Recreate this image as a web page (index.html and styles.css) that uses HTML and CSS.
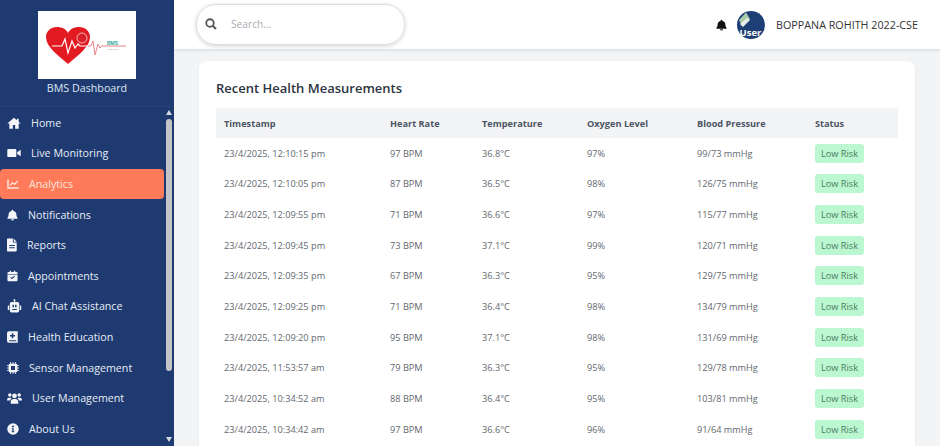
FILE: index.html
```html
<!DOCTYPE html>
<html lang="en">
<head>
    <meta charset="UTF-8">
    <meta name="viewport" content="width=device-width, initial-scale=1.0">
    <title>BMS Dashboard - Analytics</title>
    <link rel="stylesheet" href="styles.css">
</head>
<body>
    <aside class="sidebar">
        <div class="brand">
            <svg class="brand-logo" viewBox="0 0 98 68">
                <rect width="98" height="68" fill="#fff"/>
                <path d="M30 53 C20 44 8 36 8 26 C8 20 13 16 19 16 C24 16 28 18 30 22 C32 18 36 16 41 16 C47 16 52 20 52 26 C52 36 40 44 30 53z" fill="#e21b23"/>
                <path d="M14 35 H24 L27 28 L30 42 L34 30 L37 37 L40 33 L42 35 H50" fill="none" stroke="#fff" stroke-width="1.2"/>
                <circle cx="44" cy="27" r="5" fill="#d9202a" stroke="#f3b4b4" stroke-width="1"/>
                <path d="M50 35 H53 L55 30 L57 44 L60 33 L62 37 L64 35 H88" fill="none" stroke="#e8777c" stroke-width="0.9"/>
                <text class="logo-text" x="69" y="33.8">BMS</text>
                <text class="logo-sub" x="69" y="39">Health Care</text>
            </svg>
            <div class="brand-name">BMS Dashboard</div>
        </div>
        <div class="side-scroll">
            <nav class="side-nav">
                <a class="nav-item">
                    <svg class="icon w14" viewBox="0 0 24 24"><path d="M12 3 L0.5 13 H4 V22 H10 V15.5 H14 V22 H20 V13 H23.5 L20 10 V4.5 H17 V7.3z"/></svg>
                    Home
                </a>
                <a class="nav-item">
                    <svg class="icon w14" viewBox="0 0 24 24"><rect x="0.5" y="5" width="15.5" height="14" rx="2"/><path d="M17.5 10.5 L23.5 6.5 V17.5 L17.5 13.5z"/></svg>
                    Live Monitoring
                </a>
                <a class="nav-item active">
                    <svg class="icon w12" viewBox="0 0 24 24"><path d="M0.5 3 H3.5 V18.5 H23.5 V21.5 H0.5z"/><path d="M6 15 L11 9.5 L15 13 L21.5 6" fill="none" stroke="currentColor" stroke-width="2.4"/></svg>
                    Analytics
                </a>
                <a class="nav-item">
                    <svg class="icon w11" viewBox="0 0 24 24"><path d="M12 0.5 A2 2 0 0 1 14 2.5 V3.4 A8 8 0 0 1 20.5 11 C20.5 15.5 22 17 23 18.2 V20 H1 V18.2 C2 17 3.5 15.5 3.5 11 A8 8 0 0 1 10 3.4 V2.5 A2 2 0 0 1 12 0.5z M8.8 21 H15.2 A3.2 3.2 0 0 1 8.8 21z"/></svg>
                    Notifications
                </a>
                <a class="nav-item">
                    <svg class="icon w10" viewBox="0 0 18 24"><path fill-rule="evenodd" d="M1 0.5 H10.5 V7.5 H17.5 V22 A1.5 1.5 0 0 1 16 23.5 H1 A1 1 0 0 1 0 22.5 V1.5 A1 1 0 0 1 1 0.5z M4 12 V14 H14 V12z M4 16 V18 H14 V16z"/><path d="M12 0.5 L17.5 6 H12z"/></svg>
                    Reports
                </a>
                <a class="nav-item">
                    <svg class="icon w11" viewBox="0 0 24 24"><path d="M6 0.5 H9 V3 H15 V0.5 H18 V3 H20.5 A2.5 2.5 0 0 1 23 5.5 V8 H1 V5.5 A2.5 2.5 0 0 1 3.5 3 H6z"/><path fill-rule="evenodd" d="M1 9.5 H23 V21 A2.5 2.5 0 0 1 20.5 23.5 H3.5 A2.5 2.5 0 0 1 1 21z M7 15.5 L10.5 19 L17.5 13 L16 11.5 L10.5 16 L8.5 14z"/></svg>
                    Appointments
                </a>
                <a class="nav-item">
                    <svg class="icon w15" viewBox="0 0 24 24"><path d="M11 1 H13 V5 H11z"/><circle cx="12" cy="2" r="1.6"/><path fill-rule="evenodd" d="M7 5 H17 A3 3 0 0 1 20 8 V20 A3 3 0 0 1 17 23 H7 A3 3 0 0 1 4 20 V8 A3 3 0 0 1 7 5z M8.5 10 V14 H11 V10z M13 10 V14 H15.5 V10z M8 17 V19 H16 V17z"/><path d="M0.5 11 H3 V19 H0.5z M21 11 H23.5 V19 H21z"/></svg>
                    AI Chat Assistance
                </a>
                <a class="nav-item">
                    <svg class="icon w11" viewBox="0 0 22 24"><path fill-rule="evenodd" d="M4 0.5 H21.5 V23.5 H4 A4 4 0 0 1 0 19.5 V4.5 A4 4 0 0 1 4 0.5z M9.5 4.5 V8 H6 V11 H9.5 V14.5 H12.5 V11 H16 V8 H12.5 V4.5z M4.5 18.5 V20.5 H18.5 V18.5z"/></svg>
                    Health Education
                </a>
                <a class="nav-item">
                    <svg class="icon w12" viewBox="0 0 24 24"><path fill-rule="evenodd" d="M7 3 H17 A4 4 0 0 1 21 7 V17 A4 4 0 0 1 17 21 H7 A4 4 0 0 1 3 17 V7 A4 4 0 0 1 7 3z M8 8 V16 H16 V8z"/><path d="M6 0.5 H8 V3 H6z M11 0.5 H13 V3 H11z M16 0.5 H18 V3 H16z M6 21 H8 V23.5 H6z M11 21 H13 V23.5 H11z M16 21 H18 V23.5 H16z M0.5 6 H3 V8 H0.5z M0.5 11 H3 V13 H0.5z M0.5 16 H3 V18 H0.5z M21 6 H23.5 V8 H21z M21 11 H23.5 V13 H21z M21 16 H23.5 V18 H21z"/></svg>
                    Sensor Management
                </a>
                <a class="nav-item">
                    <svg class="icon w15" viewBox="0 0 24 20"><circle cx="4.5" cy="5" r="2.8"/><circle cx="19.5" cy="5" r="2.8"/><circle cx="12" cy="6.5" r="3.8"/><path d="M0 13 A3.5 3.5 0 0 1 3.5 9.5 H6 A3.5 3.5 0 0 1 7.5 10.2 A6 6 0 0 0 5 14 H0z M24 13 A3.5 3.5 0 0 0 20.5 9.5 H18 A3.5 3.5 0 0 0 16.5 10.2 A6 6 0 0 1 19 14 H24z"/><path d="M6 18 A5 5 0 0 1 11 11.5 H13 A5 5 0 0 1 18 18 V19 H6z"/></svg>
                    User Management
                </a>
                <a class="nav-item">
                    <svg class="icon w12" viewBox="0 0 24 24"><path fill-rule="evenodd" d="M12 0.5 A11.5 11.5 0 1 1 12 23.5 A11.5 11.5 0 1 1 12 0.5z M12 5 A2 2 0 1 0 12 9 A2 2 0 1 0 12 5z M9.5 10.5 V12.5 H10.8 V16.5 H9.5 V18.5 H14.5 V16.5 H13.2 V10.5z"/></svg>
                    About Us
                </a>
            </nav>
            <div class="fake-scrollbar">
                <span class="arrow up"></span>
                <span class="thumb"></span>
                <span class="arrow down"></span>
            </div>
        </div>
    </aside>

    <div class="content">
        <header class="topbar">
            <div class="search-box">
                <svg class="search-icon" viewBox="0 0 24 24"><circle cx="10" cy="10" r="7.5" fill="none" stroke="currentColor" stroke-width="3.6"/><path d="M15 15 L22 22" stroke="currentColor" stroke-width="4"/></svg>
                <span class="search-hint">Search...</span>
            </div>
            <div class="user-area">
                <svg class="bell" viewBox="0 0 24 24"><path d="M12 0.5 A2 2 0 0 1 14 2.5 V3.4 A8 8 0 0 1 20.5 11 C20.5 15.5 22 17 23 18.2 V20 H1 V18.2 C2 17 3.5 15.5 3.5 11 A8 8 0 0 1 10 3.4 V2.5 A2 2 0 0 1 12 0.5z M8.8 21 H15.2 A3.2 3.2 0 0 1 8.8 21z"/></svg>
                <svg class="avatar" viewBox="0 0 28 28">
                    <circle cx="14" cy="14" r="14" fill="#1d3f75"/>
                    <path d="M2 9 L9 1.5 L13 8 L5 15z" fill="#a9cba6"/>
                    <path d="M3 13 L10 7 L13 9 L6 16z" fill="#e8efe6"/>
                    <text class="avatar-text" x="13.5" y="24.5" text-anchor="middle">User</text>
                </svg>
                <span class="user-name">BOPPANA ROHITH 2022-CSE</span>
            </div>
        </header>

        <main class="main">
            <section class="card">
                <h2>Recent Health Measurements</h2>
                <table class="data-table">
                    <colgroup>
                        <col class="c-time"><col class="c-heart"><col class="c-temp"><col class="c-oxy"><col class="c-bp"><col class="c-status">
                    </colgroup>
                    <thead>
                        <tr><th>Timestamp</th><th>Heart Rate</th><th>Temperature</th><th>Oxygen Level</th><th>Blood Pressure</th><th>Status</th></tr>
                    </thead>
                    <tbody>
                        <tr><td>23/4/2025, 12:10:15 pm</td><td>97 BPM</td><td>36.8°C</td><td>97%</td><td>99/73 mmHg</td><td><span class="risk">Low Risk</span></td></tr>
                        <tr><td>23/4/2025, 12:10:05 pm</td><td>87 BPM</td><td>36.5°C</td><td>98%</td><td>126/75 mmHg</td><td><span class="risk">Low Risk</span></td></tr>
                        <tr><td>23/4/2025, 12:09:55 pm</td><td>71 BPM</td><td>36.6°C</td><td>97%</td><td>115/77 mmHg</td><td><span class="risk">Low Risk</span></td></tr>
                        <tr><td>23/4/2025, 12:09:45 pm</td><td>73 BPM</td><td>37.1°C</td><td>99%</td><td>120/71 mmHg</td><td><span class="risk">Low Risk</span></td></tr>
                        <tr><td>23/4/2025, 12:09:35 pm</td><td>67 BPM</td><td>36.3°C</td><td>95%</td><td>129/75 mmHg</td><td><span class="risk">Low Risk</span></td></tr>
                        <tr><td>23/4/2025, 12:09:25 pm</td><td>71 BPM</td><td>36.4°C</td><td>98%</td><td>134/79 mmHg</td><td><span class="risk">Low Risk</span></td></tr>
                        <tr><td>23/4/2025, 12:09:20 pm</td><td>95 BPM</td><td>37.1°C</td><td>98%</td><td>131/69 mmHg</td><td><span class="risk">Low Risk</span></td></tr>
                        <tr><td>23/4/2025, 11:53:57 am</td><td>79 BPM</td><td>36.3°C</td><td>95%</td><td>129/78 mmHg</td><td><span class="risk">Low Risk</span></td></tr>
                        <tr><td>23/4/2025, 10:34:52 am</td><td>88 BPM</td><td>36.4°C</td><td>95%</td><td>103/81 mmHg</td><td><span class="risk">Low Risk</span></td></tr>
                        <tr><td>23/4/2025, 10:34:42 am</td><td>97 BPM</td><td>36.6°C</td><td>96%</td><td>91/64 mmHg</td><td><span class="risk">Low Risk</span></td></tr>
                    </tbody>
                </table>
            </section>
        </main>
    </div>
</body>
</html>
```

FILE: styles.css
```css
* {
    box-sizing: border-box;
}

html, body {
    height: 100%;
}

body {
    margin: 0;
    display: flex;
    overflow: hidden;
    font-family: "Open Sans", "Noto Sans", sans-serif;
    background-color: #f3f4f6;
}

/* sidebar */
.sidebar {
    width: 174px;
    height: 100vh;
    flex-shrink: 0;
    display: flex;
    flex-direction: column;
    background-color: #1e3a70;
    color: #e6ecf6;
}

.brand {
    height: 107px;
    padding-top: 11px;
    flex-shrink: 0;
    display: flex;
    flex-direction: column;
    align-items: center;
    border-bottom: 1px solid #254379;
}

.brand-logo {
    width: 98px;
    height: 68px;
    display: block;
}

.logo-text {
    font-family: "Liberation Sans", sans-serif;
    font-size: 5px;
    font-weight: bold;
    fill: #2aa5a0;
}

.logo-sub {
    font-family: "Liberation Sans", sans-serif;
    font-size: 2.2px;
    fill: #999;
}

.brand-name {
    margin-top: 1px;
    font-size: 10.7px;
    line-height: 16px;
    color: #dfe6f2;
}

.side-scroll {
    flex: 1;
    min-height: 0;
    display: flex;
}

.side-nav {
    width: 164px;
    padding-top: 0.5px;
    flex-shrink: 0;
}

.nav-item {
    height: 30.6px;
    padding-left: 7px;
    display: flex;
    align-items: center;
    gap: 10px;
    font-size: 10.7px;
    border-radius: 4px;
    white-space: nowrap;
}

.nav-item.active {
    background-color: #ff7a59;
    color: #fbe6df;
}

.icon {
    height: 14px;
    flex-shrink: 0;
    fill: currentColor;
    color: #f4f6fa;
}

.active .icon {
    color: #fbe6df;
}

.w10 { width: 10px; }
.w11 { width: 11px; }
.w12 { width: 12px; }
.w14 { width: 14px; }
.w15 { width: 15px; }

.fake-scrollbar {
    width: 10px;
    display: flex;
    flex-direction: column;
    align-items: center;
}

.arrow {
    width: 0;
    height: 0;
    flex-shrink: 0;
    border-left: 3.5px solid transparent;
    border-right: 3.5px solid transparent;
}

.arrow.up {
    margin-top: 3px;
    border-bottom: 5px solid #d5d8de;
}

.arrow.down {
    margin-top: 66px;
    border-top: 5px solid #d5d8de;
}

.thumb {
    width: 6px;
    height: 252px;
    margin-top: 4px;
    flex-shrink: 0;
    border-radius: 3px;
    background-color: #c3c5c9;
}

/* top bar and content */
.content {
    flex: 1;
    min-width: 0;
    display: flex;
    flex-direction: column;
}

.topbar {
    height: 49px;
    padding: 0 22px;
    flex-shrink: 0;
    display: flex;
    align-items: center;
    justify-content: space-between;
    background-color: #fff;
    box-shadow: 0 1px 3px rgba(0, 0, 0, 0.12);
}

.search-box {
    width: 209px;
    height: 41px;
    margin-top: -1px;
    padding-left: 8px;
    display: flex;
    align-items: center;
    gap: 14px;
    border: 1px solid #ddd;
    border-radius: 20px;
    box-shadow: 0 1px 4px rgba(0, 0, 0, 0.18);
}

.search-icon {
    width: 12px;
    height: 12px;
    color: #555;
}

.search-hint {
    font-size: 10.2px;
    color: #a8abb0;
}

.user-area {
    display: flex;
    align-items: center;
}

.bell {
    width: 11px;
    height: 12px;
    margin-right: 10px;
    fill: #111;
}

.avatar {
    width: 28px;
    height: 28px;
    margin-right: 11px;
}

.avatar-text {
    font-family: "Open Sans", sans-serif;
    font-size: 9.5px;
    font-weight: bold;
    fill: #fff;
}

.user-name {
    font-size: 10.75px;
    color: #333;
}

.main {
    flex: 1;
    min-height: 0;
    padding: 12px 25px 0;
    overflow: hidden;
}

.card {
    padding: 17px 17px 30px;
    background-color: #fff;
    border-radius: 8px;
    box-shadow: 0 1px 3px rgba(0, 0, 0, 0.06);
}

h2 {
    margin: 0 0 10px;
    font-size: 13px;
    line-height: 20px;
    font-weight: 600;
    color: #2c3440;
}

.data-table {
    width: 682px;
    table-layout: fixed;
    border-collapse: collapse;
    font-size: 9.2px;
}

.c-time { width: 166px; }
.c-heart { width: 92px; }
.c-temp { width: 105px; }
.c-oxy { width: 110px; }
.c-bp { width: 118px; }
.c-status { width: 91px; }

th {
    height: 30px;
    padding: 0 8px;
    text-align: left;
    font-weight: 700;
    color: #4b5563;
    background-color: #f3f4f6;
}

td {
    height: 30.65px;
    padding: 0 8px;
    color: #63676e;
}

.risk {
    display: inline-block;
    padding: 0 6px;
    line-height: 19px;
    border-radius: 3px;
    color: #4a7d60;
    background-color: #bbf7d0;
}
```
